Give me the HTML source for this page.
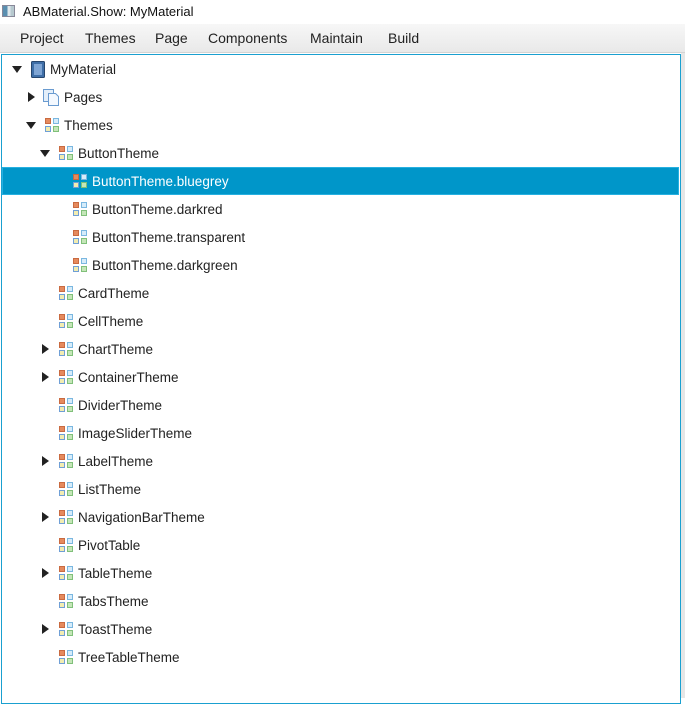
<!DOCTYPE html>
<html><head><meta charset="utf-8"><style>
*{margin:0;padding:0;box-sizing:border-box}
body{width:685px;height:698px;overflow:hidden;background:#fff;font-family:"Segoe UI","Liberation Sans",sans-serif;font-size:13px;color:#222;position:relative}
.title{position:absolute;left:0;top:0;width:685px;height:24px;background:#fff}
.title span{position:absolute;left:23px;top:4px;font-size:13px;color:#111}
.wicon{position:absolute;left:2px;top:5px;width:13px;height:12px;border:1px solid #889;background:linear-gradient(90deg,#5a8fb0 0 40%,#dfe8ec 40% 70%,#b7c9cf 70%)}
.menu{position:absolute;left:0;top:24px;width:685px;height:29px;background:linear-gradient(#f7f7f7,#e9e9e9);border-bottom:1px solid #d4d4d4}
.menu span{position:absolute;top:6px;font-size:14px;color:#222}
.tree{position:absolute;left:1px;top:54px;width:680px;height:650px;border:1px solid #1aa0d0;background:#fff}
.scr{position:absolute;left:681px;top:53px;width:4px;height:645px;background:#e6e6e6}
.row{position:absolute;left:2px;width:677px;height:28px}
.row.sel{background:#0096c9;border:1px solid #27b0e0;color:#fff}
.txt{position:absolute;top:7px;font-size:13.5px;white-space:nowrap}
.arr{position:absolute;width:0;height:0}
.down{border-left:5px solid transparent;border-right:5px solid transparent;border-top:7px solid #222;top:11px}
.right{border-top:5px solid transparent;border-bottom:5px solid transparent;border-left:7px solid #222;top:9px}
.ti{position:absolute;top:7px;width:14px;height:14px}
.ti i{position:absolute;width:6px;height:6px}
.ti i:nth-child(1){left:0;top:0;background:#e58a5d;border:1px solid #c96a40}
.ti i:nth-child(2){left:8px;top:0;background:#d6ecfa;border:1px solid #7ab7e0}
.ti i:nth-child(3){left:0;top:8px;background:#f2ecb0;border:1px solid #6f9fd6}
.ti i:nth-child(4){left:8px;top:8px;background:#c5e6b8;border:1px solid #80c07a}
</style></head><body>
<div class="title"><div class="wicon"></div><span>ABMaterial.Show: MyMaterial</span></div>
<div class="menu">
<span style="left:20px">Project</span><span style="left:85px">Themes</span><span style="left:155px">Page</span><span style="left:208px">Components</span><span style="left:310px">Maintain</span><span style="left:388px">Build</span>
</div>
<div class="tree"></div>
<div class="scr"></div>

<div class="row" style="top:55px">
<div class="arr down" style="left:10px"></div>
<svg style="position:absolute;left:29px;top:6px" width="14" height="17"><rect x="0.5" y="0.5" width="13" height="16" rx="1" fill="#3f6fa8" stroke="#27466d"/><rect x="3" y="3" width="8" height="11" fill="#7fa5d4"/></svg>
<span class="txt" style="left:48px">MyMaterial</span></div>

<div class="row" style="top:83px">
<div class="arr right" style="left:26px"></div>
<svg style="position:absolute;left:41px;top:6px" width="17" height="17"><rect x="0.5" y="0.5" width="10" height="12" fill="#e4effa" stroke="#6a9bd0"/><path d="M5.5 4.5h7l3 3v9h-10z" fill="#f4f9ff" stroke="#6a9bd0"/></svg>
<span class="txt" style="left:62px">Pages</span></div>

<div class="row" style="top:111px">
<div class="arr down" style="left:24px"></div>
<div class="ti" style="left:43px"><i></i><i></i><i></i><i></i></div>
<span class="txt" style="left:62px">Themes</span></div>

<div class="row" style="top:139px">
<div class="arr down" style="left:38px"></div>
<div class="ti" style="left:57px"><i></i><i></i><i></i><i></i></div>
<span class="txt" style="left:76px">ButtonTheme</span></div>

<div class="row sel" style="top:167px">
<div class="ti" style="left:70px;top:6px"><i></i><i></i><i></i><i></i></div>
<span class="txt" style="left:89px;top:6px">ButtonTheme.bluegrey</span></div>

<div class="row" style="top:195px"><div class="ti" style="left:71px"><i></i><i></i><i></i><i></i></div><span class="txt" style="left:90px">ButtonTheme.darkred</span></div>
<div class="row" style="top:223px"><div class="ti" style="left:71px"><i></i><i></i><i></i><i></i></div><span class="txt" style="left:90px">ButtonTheme.transparent</span></div>
<div class="row" style="top:251px"><div class="ti" style="left:71px"><i></i><i></i><i></i><i></i></div><span class="txt" style="left:90px">ButtonTheme.darkgreen</span></div>

<div class="row" style="top:279px"><div class="ti" style="left:57px"><i></i><i></i><i></i><i></i></div><span class="txt" style="left:76px">CardTheme</span></div>
<div class="row" style="top:307px"><div class="ti" style="left:57px"><i></i><i></i><i></i><i></i></div><span class="txt" style="left:76px">CellTheme</span></div>
<div class="row" style="top:335px"><div class="arr right" style="left:40px"></div><div class="ti" style="left:57px"><i></i><i></i><i></i><i></i></div><span class="txt" style="left:76px">ChartTheme</span></div>
<div class="row" style="top:363px"><div class="arr right" style="left:40px"></div><div class="ti" style="left:57px"><i></i><i></i><i></i><i></i></div><span class="txt" style="left:76px">ContainerTheme</span></div>
<div class="row" style="top:391px"><div class="ti" style="left:57px"><i></i><i></i><i></i><i></i></div><span class="txt" style="left:76px">DividerTheme</span></div>
<div class="row" style="top:419px"><div class="ti" style="left:57px"><i></i><i></i><i></i><i></i></div><span class="txt" style="left:76px">ImageSliderTheme</span></div>
<div class="row" style="top:447px"><div class="arr right" style="left:40px"></div><div class="ti" style="left:57px"><i></i><i></i><i></i><i></i></div><span class="txt" style="left:76px">LabelTheme</span></div>
<div class="row" style="top:475px"><div class="ti" style="left:57px"><i></i><i></i><i></i><i></i></div><span class="txt" style="left:76px">ListTheme</span></div>
<div class="row" style="top:503px"><div class="arr right" style="left:40px"></div><div class="ti" style="left:57px"><i></i><i></i><i></i><i></i></div><span class="txt" style="left:76px">NavigationBarTheme</span></div>
<div class="row" style="top:531px"><div class="ti" style="left:57px"><i></i><i></i><i></i><i></i></div><span class="txt" style="left:76px">PivotTable</span></div>
<div class="row" style="top:559px"><div class="arr right" style="left:40px"></div><div class="ti" style="left:57px"><i></i><i></i><i></i><i></i></div><span class="txt" style="left:76px">TableTheme</span></div>
<div class="row" style="top:587px"><div class="ti" style="left:57px"><i></i><i></i><i></i><i></i></div><span class="txt" style="left:76px">TabsTheme</span></div>
<div class="row" style="top:615px"><div class="arr right" style="left:40px"></div><div class="ti" style="left:57px"><i></i><i></i><i></i><i></i></div><span class="txt" style="left:76px">ToastTheme</span></div>
<div class="row" style="top:643px"><div class="ti" style="left:57px"><i></i><i></i><i></i><i></i></div><span class="txt" style="left:76px">TreeTableTheme</span></div>
</body></html>
